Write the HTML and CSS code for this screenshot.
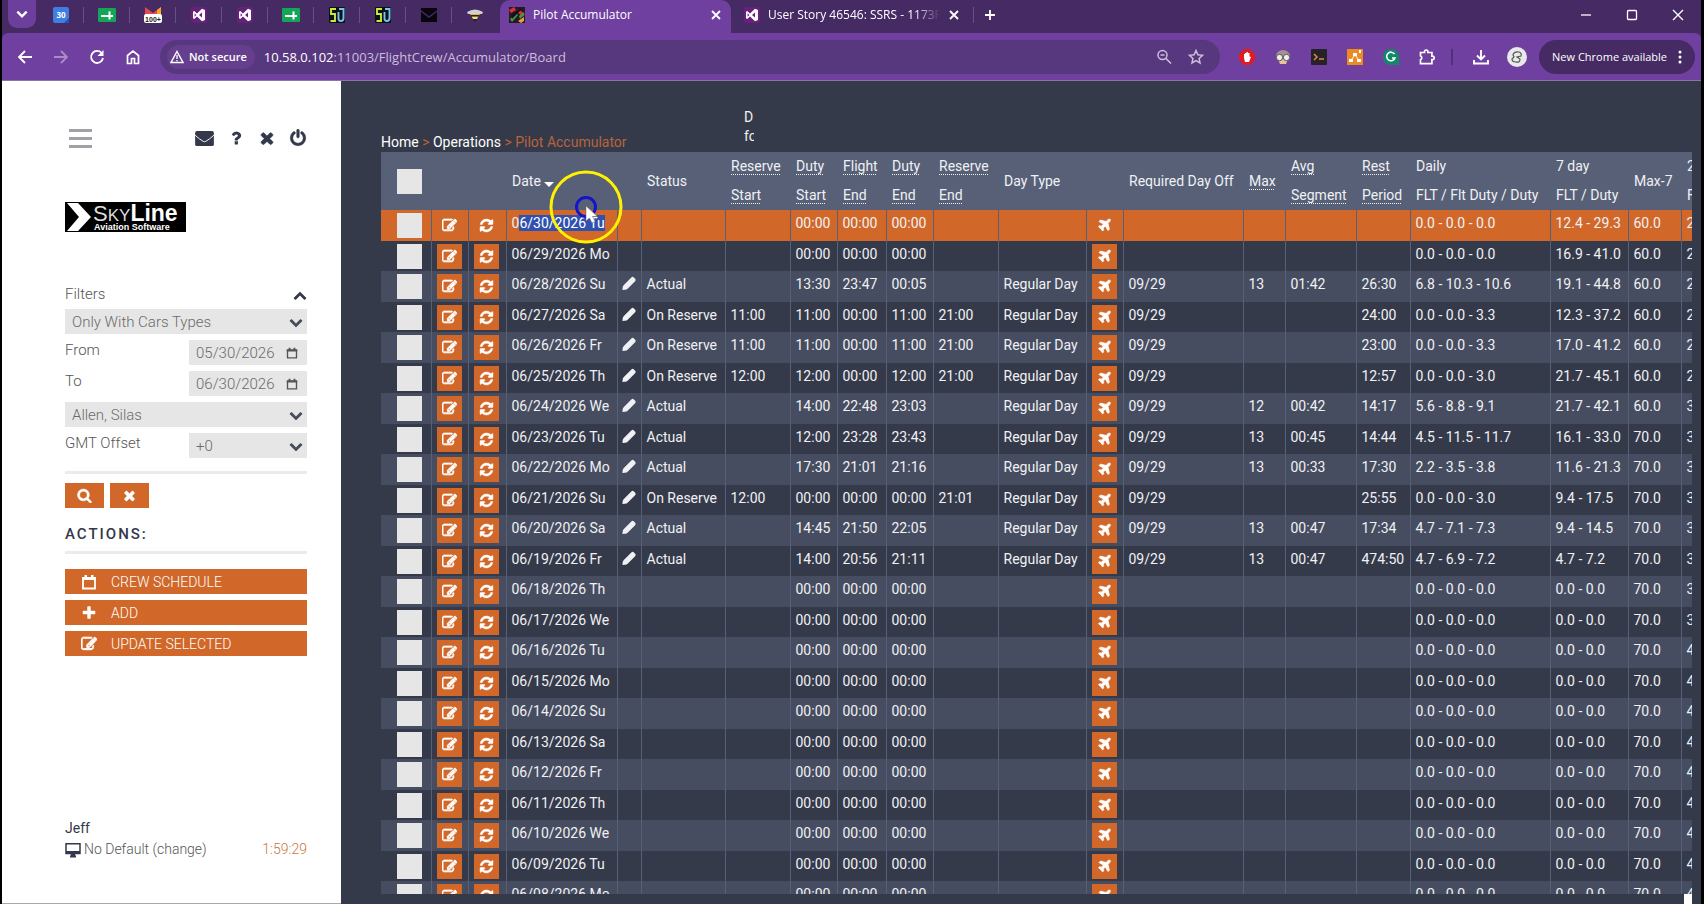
FILE: index.html
```html
<!DOCTYPE html>
<html lang="en">
<head>
<meta charset="utf-8">
<title>Pilot Accumulator</title>
<link rel="stylesheet" href="styles.css">
</head>
<body>
<svg class="sprite" aria-hidden="true">
  <symbol id="edit" viewBox="0 0 1792 1792"><path d="M888 1184l116-116-152-152-116 116v56h96v96h56zm440-720q-16-16-33 1l-350 350q-17 17-1 33t33-1l350-350q17-17 1-33zm80 594v190q0 119-84.500 203.500t-203.500 84.500h-832q-119 0-203.500-84.500t-84.500-203.500v-832q0-119 84.500-203.500t203.500-84.500h832q63 0 117 25 15 7 18 23 3 17-9 29l-49 49q-14 14-32 8-23-6-45-6h-832q-66 0-113 47t-47 113v832q0 66 47 113t113 47h832q66 0 113-47t47-113v-126q0-13 9-22l64-64q15-15 35-7t20 29zm-96-738l288 288-672 672h-288v-288zm444 132l-92 92-288-288 92-92q28-28 68-28t68 28l152 152q28 28 28 68t-28 68z" stroke="currentColor" stroke-width="100"/></symbol>
  <symbol id="refresh" viewBox="0 0 1792 1792"><path d="M1639 1056q0 5-1 7-64 268-268 434.500t-478 166.500q-146 0-282.500-55t-243.500-157l-129 129q-19 19-45 19t-45-19-19-45v-448q0-26 19-45t45-19h448q26 0 45 19t19 45-19 45l-137 137q71 66 161 102t187 36q134 0 250-65t186-179q11-17 53-117 8-23 30-23h192q13 0 22.500 9.500t9.500 22.500zm25-800v448q0 26-19 45t-45 19h-448q-26 0-45-19t-19-45 19-45l138-138q-148-137-349-137-134 0-250 65t-186 179q-11 17-53 117-8 23-30 23h-199q-13 0-22.500-9.500t-9.500-22.500v-7q65-268 270-434.500t480-166.500q146 0 284 55.500t245 156.500l130-129q19-19 45-19t45 19 19 45z" stroke="currentColor" stroke-width="60"/></symbol>
  <symbol id="plane" viewBox="0 0 1792 1792"><path d="M1568 160q44 52 12 148t-108 172l-161 161 160 696q5 19-12 33l-128 96q-7 6-19 6-4 0-7-1-15-3-21-16l-279-508-259 259 53 194q5 17-8 31l-96 96q-9 9-23 9h-2q-15-2-24-13l-189-252-252-189q-11-7-13-23-1-13 9-25l96-97q9-9 23-9 6 0 8 1l194 53 259-259-508-279q-14-8-17-24-2-16 9-27l128-128q14-13 30-8l665 159 160-160q76-76 172-108t148 12z" stroke="currentColor" stroke-width="100"/></symbol>
  <symbol id="times" viewBox="0 0 1792 1792"><path d="M1490 1322q0 40-28 68l-136 136q-28 28-68 28t-68-28l-294-294-294 294q-28 28-68 28t-68-28l-136-136q-28-28-28-68t28-68l294-294-294-294q-28-28-28-68t28-68l136-136q28-28 68-28t68 28l294 294 294-294q28-28 68-28t68 28l136 136q28 28 28 68t-28 68l-294 294 294 294q28 28 28 68z" stroke="currentColor" stroke-width="60"/></symbol>
  <symbol id="plus" viewBox="0 0 1792 1792"><path d="M1600 736v192q0 40-28 68t-68 28h-416v416q0 40-28 68t-68 28h-192q-40 0-68-28t-28-68v-416h-416q-40 0-68-28t-28-68v-192q0-40 28-68t68-28h416v-416q0-40 28-68t68-28h192q40 0 68 28t28 68v416h416q40 0 68 28t28 68z"/></symbol>
  <symbol id="search" viewBox="0 0 1792 1792"><path d="M1216 832q0-185-131.500-316.500t-316.500-131.500-316.500 131.500-131.500 316.500 131.500 316.500 316.500 131.500 316.500-131.500 131.500-316.500zm512 832q0 52-38 90t-90 38q-54 0-90-38l-343-342q-179 124-399 124-143 0-273.500-55.500t-225-150-150-225-55.500-273.500 55.500-273.500 150-225 225-150 273.500-55.500 273.500 55.500 225 150 150 225 55.500 273.500q0 220-124 399l343 343q37 37 37 90z" stroke="currentColor" stroke-width="60"/></symbol>
  <symbol id="down" viewBox="0 0 1792 1792"><path d="M1683 808l-742 741q-19 19-45 19t-45-19l-742-741q-19-19-19-45.500t19-45.500l166-165q19-19 45-19t45 19l531 531 531-531q19-19 45-19t45 19l166 165q19 19 19 45.500t-19 45.500z"/></symbol>
  <symbol id="up" viewBox="0 0 1792 1792"><path d="M1683 1331l-166 165q-19 19-45 19t-45-19l-531-531-531 531q-19 19-45 19t-45-19l-166-165q-19-19-19-45.500t19-45.500l742-741q19-19 45-19t45 19l742 741q19 19 19 45.500t-19 45.500z"/></symbol>
  <symbol id="power" viewBox="0 0 1792 1792"><path d="M1664 896q0 156-61 298t-164 245-245 164-298 61-298-61-245-164-164-245-61-298q0-182 80.500-343t226.500-270q43-32 95.500-25t83.500 50q32 42 24.500 94.500t-49.500 84.500q-98 74-151.500 181t-53.500 228q0 104 40.500 198.500t109.500 163.500 163.500 109.500 198.500 40.500 198.500-40.500 163.500-109.500 109.500-163.500 40.500-198.500q0-121-53.500-228t-151.500-181q-42-32-49.500-84.500t24.500-94.500q31-43 84-50t95 25q146 109 226.500 270t80.500 343zm-640-768v640q0 52-38 90t-90 38-90-38-38-90v-640q0-52 38-90t90-38 90 38 38 90z" stroke="currentColor" stroke-width="50"/></symbol>
  <symbol id="question" viewBox="0 0 1792 1792"><path d="M1088 1256v240q0 16-12 28t-28 12h-240q-16 0-28-12t-12-28v-240q0-16 12-28t28-12h240q16 0 28 12t12 28zm316-600q0 54-15.500 101t-35 76.500-55 59.500-57.500 43.500-61 35.500q-41 23-68.500 65t-27.500 67q0 17-12 32.500t-28 15.500h-240q-15 0-25.500-18.500t-10.500-37.500v-45q0-83 65-156.500t143-108.500q59-27 84-56t25-76q0-42-46.500-74t-107.500-32q-65 0-108 29-35 25-107 115-13 16-31 16-12 0-25-8l-164-125q-13-10-15.500-25t5.500-28q160-266 464-266 80 0 161 31t146 83 106 127.500 41 158.500z"/></symbol>
  <symbol id="pencil" viewBox="0 0 16 16"><path d="M10.500 1.500Q11.900.2 13.200 1.500L14.600 2.900Q15.800 4.200 14.500 5.500L6.800 13.300Q5.500 14.600 3.800 14.700L1 15 1.200 12.200Q1.300 10.700 2.500 9.500Z"/></symbol>
  <symbol id="calendar" viewBox="0 0 16 16"><path fill="none" stroke="currentColor" stroke-width="1.800" d="M2 4.500h12v10H2z"/><path d="M1 3h14v3H1zM3.500 1h2.500v3H3.500zM10 1h2.500v3H10z"/></symbol>
  <symbol id="envelope" viewBox="0 0 20 16"><rect x="0" y="0" width="20" height="16" rx="2"/><path d="M0 4.500Q5 9 8.500 11q1.500.9 3 0Q15 9 20 4.500" fill="none" stroke="#fff" stroke-width="1"/></symbol>
  <symbol id="desktop" viewBox="0 0 16 16"><path fill="none" stroke="currentColor" stroke-width="1.500" d="M1 1.800h14v9.700H1z"/><path d="M1 9h14v3H1zM6 12h4l1 2.500v1H5v-1z"/></symbol>
  <symbol id="close" viewBox="0 0 12 12"><path d="M2 2l8 8M10 2l-8 8" fill="none" stroke="currentColor" stroke-width="1.800"/></symbol>
  <symbol id="vs" viewBox="0 0 16 16"><rect width="16" height="16" rx="2" fill="#68217a"/><path d="M11 1.800L14 3v10l-3 1.200-5-4.600L3.200 12 2 11.300V4.700L3.200 4 6 6.400zM11 5.500L8 8l3 2.500zM3.600 6.200v3.600L5.300 8z" fill="#fff" fill-rule="evenodd"/></symbol>
  <symbol id="sheet" viewBox="0 0 18 16"><rect y="1" width="18" height="14" rx="1" fill="#14a558"/><path d="M3 9h12M11.500 4.500v8" stroke="#fff" stroke-width="2" fill="none"/></symbol>
  <symbol id="sq" viewBox="0 0 16 16"><rect width="16" height="16" rx="1" fill="#111"/><path d="M7 2H2v5h4v7H1.500" fill="none" stroke="#c5ea45" stroke-width="1.900"/><path d="M10 2h4.500v9q0 3-2.500 3-2.500 0-2.500-2.500V5" fill="none" stroke="#6fc6ee" stroke-width="1.900"/></symbol>
</svg>

<header class="browser">
  <div class="tabs">
    <button class="tab-search" aria-label="Search tabs"><svg viewBox="0 0 12 12"><path d="M2 4l4 4 4-4" fill="none" stroke="#fff" stroke-width="2"/></svg></button>
    <div class="pin"><svg viewBox="0 0 16 16"><rect width="16" height="16" rx="2" fill="#3f7de0"/><path d="M16 11v3l-2 2h-3z" fill="#1b53b4"/><text class="badge-text" x="8" y="11" text-anchor="middle">30</text></svg></div>
    <div class="pin"><svg class="wide"><use href="#sheet"/></svg></div>
    <div class="pin"><svg class="wide" viewBox="0 0 18 16"><path d="M1 0l8 6 8-6v10H1z" fill="#e5484d"/><path d="M13 3l4-3v9h-4z" fill="#f5a623"/><rect y="7" width="18" height="9" rx="2" fill="#fff"/><text class="count-text" x="9" y="15" text-anchor="middle">100+</text></svg></div>
    <div class="pin"><svg><use href="#vs"/></svg></div>
    <div class="pin"><svg><use href="#vs"/></svg></div>
    <div class="pin"><svg class="wide"><use href="#sheet"/></svg></div>
    <div class="pin"><svg><use href="#sq"/></svg></div>
    <div class="pin"><svg><use href="#sq"/></svg></div>
    <div class="pin"><svg class="wide" viewBox="0 0 18 16"><path d="M1 1h16v14H1z" fill="#08060c"/><path d="M1 4l8 6 8-6" fill="none" stroke="#452a63" stroke-width="1.500"/></svg></div>
    <div class="pin"><svg viewBox="0 0 16 16"><path d="M0 5q8-5 16 0l-1 2H1z" fill="#cfd2d4"/><path d="M3 7h10l-2 3H5z" fill="#e8b93b"/><path d="M4 8h8v1.500H4zM6 12h4l-2 3z" fill="#222"/><path d="M5 10h6l-1 2H6z" fill="#f3dc8b"/></svg></div>
    <div class="tab active"><svg class="fav" viewBox="0 0 16 16"><rect width="16" height="16" fill="#2b1723"/><path d="M0 3l5-3 2 3-5 3zM9 2l7 5-2 3-6-5z" fill="#d8323c"/><path d="M1 12l6-6 2 2-6 7zM10 9l5-4v3l-4 4z" fill="#3c9c4c"/><path d="M9 14l6-4v4l-3 2z" fill="#e2a53b"/><path d="M2 9l9-8 1 2-9 9z" fill="#181018"/></svg><span class="tab-title">Pilot Accumulator</span><button class="tab-close" aria-label="Close tab"><svg><use href="#close"/></svg></button></div>
    <div class="tab"><svg class="fav"><use href="#vs"/></svg><span class="tab-title fade">User Story 46546: SSRS - 1173R</span><button class="tab-close" aria-label="Close tab"><svg><use href="#close"/></svg></button></div>
    <button class="new-tab" aria-label="New tab"><svg viewBox="0 0 12 12"><path d="M6 1v10M1 6h10" stroke="#fff" stroke-width="1.800"/></svg></button>
    <div class="window-buttons">
      <button aria-label="Minimize"><svg viewBox="0 0 12 12"><path d="M1 6h10" stroke="#fff" stroke-width="1.300"/></svg></button>
      <button aria-label="Maximize"><svg viewBox="0 0 12 12"><rect x="1.500" y="1.500" width="9" height="9" rx="1" fill="none" stroke="#fff" stroke-width="1.300"/></svg></button>
      <button aria-label="Close window"><svg viewBox="0 0 12 12"><path d="M1 1l10 10M11 1L1 11" stroke="#fff" stroke-width="1.400"/></svg></button>
    </div>
  </div>
  <div class="toolbar">
    <nav class="nav-buttons">
      <button aria-label="Back"><svg viewBox="0 0 16 16"><path d="M15 8H2.500M8 2L2 8l6 6" fill="none" stroke="#fff" stroke-width="1.800"/></svg></button>
      <button class="dim" aria-label="Forward"><svg viewBox="0 0 16 16"><path d="M1 8h12.500M8 2l6 6-6 6" fill="none" stroke="#fff" stroke-width="1.800"/></svg></button>
      <button aria-label="Reload"><svg viewBox="0 0 16 16"><path d="M13 4.500A6 6 0 1 0 14 9" fill="none" stroke="#fff" stroke-width="1.800"/><path d="M14.500 1v6h-6z" fill="#fff"/></svg></button>
      <button aria-label="Home"><svg viewBox="0 0 16 16"><path d="M2.500 6.500L8 2l5.500 4.500v8h-4v-5h-3v5h-4z" fill="none" stroke="#fff" stroke-width="1.700"/></svg></button>
    </nav>
    <div class="address">
      <span class="chip"><svg viewBox="0 0 14 14"><path d="M7 1.500L13 12.500H1z" fill="none" stroke="#fff" stroke-width="1.400"/><path d="M7 5v4M7 10v1.300" stroke="#fff" stroke-width="1.300"/></svg>Not secure</span>
      <span class="url">10.58.0.102<span>:11003/FlightCrew/Accumulator/Board</span></span>
      <button aria-label="Zoom"><svg viewBox="0 0 16 16"><circle cx="6.500" cy="6" r="4.500" fill="none" stroke="#cdbfdc" stroke-width="1.500"/><path d="M4.500 6h4M10 9.500l5 5" stroke="#cdbfdc" stroke-width="1.600"/></svg></button>
      <button aria-label="Bookmark"><svg viewBox="0 0 16 16"><path d="M8 1.500l1.900 4.300 4.600.5-3.400 3.100.9 4.600L8 11.700 4 14l.9-4.600L1.500 6.300l4.600-.5z" fill="none" stroke="#cdbfdc" stroke-width="1.500"/></svg></button>
    </div>
    <div class="extensions">
      <button aria-label="Ad blocker"><svg viewBox="0 0 16 16"><path d="M5 0h6l5 5v6l-5 5H5l-5-5V5z" fill="#e01b24"/><path d="M5 5v4l1 4h4l2-5-1.500-.5V4H9V3H7.500v1H6v1z" fill="#fff"/></svg></button>
      <button aria-label="Extension"><svg viewBox="0 0 16 16"><path d="M1 7a7 6 0 0 1 14 0l-1 2H2z" fill="#a99090"/><path d="M3 10h10l-2 5H5z" fill="#e9c29a"/><circle cx="4.500" cy="8.500" r="3.200" fill="#eee" stroke="#555"/><circle cx="11.500" cy="8.500" r="3.200" fill="#eee" stroke="#555"/></svg></button>
      <button aria-label="Terminal"><svg viewBox="0 0 16 16"><rect width="16" height="16" rx="1" fill="#26222a"/><path d="M3 5l3 3-3 3M8 10h5" fill="none" stroke="#e08a3c" stroke-width="1.500"/></svg></button>
      <button aria-label="Diagram"><svg viewBox="0 0 16 16"><rect width="16" height="16" fill="#ee8a22"/><path d="M6 4h4v3H6zM2 10h4v3H2zM10 10h4v3h-4zM12 1h2v3h-2z" fill="#fff"/><path d="M8 6l-4 5M8 6l4 5" stroke="#fff"/></svg></button>
      <button aria-label="Grammar"><svg viewBox="0 0 16 16"><path d="M8 0a8 8 0 0 1 8 8v8H8A8 8 0 0 1 8 0z" fill="#0f8a68"/><path d="M11.500 5A4.300 4.300 0 1 0 12 9H9" fill="none" stroke="#fff" stroke-width="1.600"/></svg></button>
      <button aria-label="Extensions"><svg viewBox="0 0 16 16"><path d="M1.500 3.500h4V2.700a1.700 1.700 0 0 1 3.400 0v.8h4v3.700h.6a1.700 1.700 0 0 1 0 3.400h-.6v4H1.500v-4a1.900 1.900 0 0 0 0-3.600z" fill="none" stroke="#fff" stroke-width="1.700"/></svg></button>
    </div>
    <button class="download" aria-label="Downloads"><svg viewBox="0 0 16 16"><path d="M8 1v9M4 6.500L8 10.500l4-4M1 11v3.500h14V11" fill="none" stroke="#fff" stroke-width="1.900"/></svg></button>
    <button class="avatar" aria-label="Profile"><svg viewBox="0 0 20 20"><circle cx="10" cy="10" r="10" fill="#e9e9e9"/><path d="M6 8q1-4 6-3 3 1 2 4l-4 1 3 2q0 4-4 3-4 0-4-3l2-2z" fill="none" stroke="#555" stroke-width="1.200"/></svg></button>
    <button class="update">New Chrome available<svg viewBox="0 0 4 14"><circle cx="2" cy="2" r="1.500"/><circle cx="2" cy="7" r="1.500"/><circle cx="2" cy="12" r="1.500"/></svg></button>
  </div>
</header>

<div class="page">
  <aside class="sidebar">
    <div class="side-top">
      <button class="burger" aria-label="Menu"><i></i><i></i><i></i></button>
      <div class="side-icons">
        <button aria-label="Messages"><svg class="mail"><use href="#envelope"/></svg></button>
        <button aria-label="Help"><svg><use href="#question"/></svg></button>
        <button aria-label="Close"><svg><use href="#times"/></svg></button>
        <button aria-label="Log out"><svg><use href="#power"/></svg></button>
      </div>
    </div>
    <svg class="logo" viewBox="0 0 121 30" role="img" aria-label="SkyLine Aviation Software"><rect width="121" height="30" fill="#000"/><path d="M2 1h11l13 14-13 14H2l12-14z" fill="#fff"/><text class="logo-thin" x="28" y="19">S<tspan class="logo-caps">KY</tspan><tspan class="logo-bold">Line</tspan></text><text class="logo-sub" x="29" y="28">Aviation Software</text></svg>
    <form class="filters">
      <div class="filters-head"><span>Filters</span><svg><use href="#up"/></svg></div>
      <div class="control"><select aria-label="Types"><option>Only With Cars Types</option></select><svg><use href="#down"/></svg></div>
      <div class="field"><label for="from">From</label><div class="control"><input id="from" type="text" value="05/30/2026"><svg class="cal"><use href="#calendar"/></svg></div></div>
      <div class="field"><label for="to">To</label><div class="control"><input id="to" type="text" value="06/30/2026"><svg class="cal"><use href="#calendar"/></svg></div></div>
      <div class="control"><select aria-label="Pilot"><option>Allen, Silas</option></select><svg><use href="#down"/></svg></div>
      <div class="field"><label for="gmt">GMT Offset</label><div class="control"><select id="gmt"><option>+0</option></select><svg><use href="#down"/></svg></div></div>
      <hr>
      <div class="form-buttons">
        <button type="button" aria-label="Search"><svg><use href="#search"/></svg></button>
        <button type="button" aria-label="Clear"><svg><use href="#times"/></svg></button>
      </div>
    </form>
    <h2 class="actions-title">ACTIONS:</h2>
    <hr>
    <div class="actions">
      <button><svg><use href="#calendar"/></svg>CREW SCHEDULE</button>
      <button><svg><use href="#plus"/></svg>ADD</button>
      <button><svg><use href="#edit"/></svg>UPDATE SELECTED</button>
    </div>
    <footer class="user">
      <div class="user-name">Jeff</div>
      <div class="user-row"><a href="#"><svg><use href="#desktop"/></svg>No Default (change)</a><span class="timer">1:59:29</span></div>
    </footer>
  </aside>

  <main class="main">
    <div class="crumb-row">
      <nav class="crumbs"><a href="#">Home</a> <span>&gt;</span> <a href="#">Operations</a> <span>&gt; Pilot Accumulator</span></nav>
      <div class="note">D<br>for<br>-</div>
    </div>
    <div class="board">
      <table class="grid">
        <colgroup><col class="w50"><col class="w37"><col class="w38"><col class="w111"><col class="w24"><col class="w84"><col class="w65"><col class="w47"><col class="w49"><col class="w47"><col class="w65"><col class="w88"><col class="w37"><col class="w120"><col class="w42"><col class="w71"><col class="w54"><col class="w140"><col class="w78"><col class="w53"><col class="w65"></colgroup>
        <thead><tr>
          <th class="check"><input type="checkbox" aria-label="Select all"></th><th></th><th></th>
          <th>Date<i class="sort"></i></th><th></th><th>Status</th>
          <th><abbr>Reserve</abbr><br><abbr>Start</abbr></th><th><abbr>Duty</abbr><br><abbr>Start</abbr></th>
          <th><abbr>Flight</abbr><br><abbr>End</abbr></th><th><abbr>Duty</abbr><br><abbr>End</abbr></th>
          <th><abbr>Reserve</abbr><br><abbr>End</abbr></th><th>Day Type</th><th></th><th>Required Day Off</th>
          <th><abbr>Max</abbr></th><th><abbr>Avg</abbr><br><abbr>Segment</abbr></th><th><abbr>Rest</abbr><br><abbr>Period</abbr></th>
          <th>Daily<br>FLT / Flt Duty / Duty</th><th>7 day<br>FLT / Duty</th><th>Max-7</th><th>28 day<br>FLT</th>
        </tr></thead>
        <tbody id="rows"></tbody>
      </table>
      <svg class="pointer" viewBox="0 0 76 76" aria-hidden="true"><circle cx="38" cy="38" r="35" fill="none" stroke="#fff200" stroke-width="3"/><circle cx="38" cy="38" r="9.500" fill="none" stroke="#1414c8" stroke-width="3"/><path d="M38 37v15l3.500-3 2.500 5 3-1.500-2.500-5h5z" fill="#fff" stroke="#666" stroke-width=".5"/></svg>
    </div>
    <div class="corner"></div>
  </main>
</div>
<script src="board.js"></script>
</body>
</html>
```
FILE: board.js
```js
// date | status | reserve start | duty start | flight end | duty end | reserve end | max | avg segment | rest | daily | 7 day | max-7 | 28 day
const data = `06/30/2026 Tu|||00:00|00:00|00:00|||||0.0 - 0.0 - 0.0|12.4 - 29.3|60.0|2
06/29/2026 Mo|||00:00|00:00|00:00|||||0.0 - 0.0 - 0.0|16.9 - 41.0|60.0|2
06/28/2026 Su|Actual||13:30|23:47|00:05||13|01:42|26:30|6.8 - 10.3 - 10.6|19.1 - 44.8|60.0|2
06/27/2026 Sa|On Reserve|11:00|11:00|00:00|11:00|21:00|||24:00|0.0 - 0.0 - 3.3|12.3 - 37.2|60.0|2
06/26/2026 Fr|On Reserve|11:00|11:00|00:00|11:00|21:00|||23:00|0.0 - 0.0 - 3.3|17.0 - 41.2|60.0|2
06/25/2026 Th|On Reserve|12:00|12:00|00:00|12:00|21:00|||12:57|0.0 - 0.0 - 3.0|21.7 - 45.1|60.0|2
06/24/2026 We|Actual||14:00|22:48|23:03||12|00:42|14:17|5.6 - 8.8 - 9.1|21.7 - 42.1|60.0|3
06/23/2026 Tu|Actual||12:00|23:28|23:43||13|00:45|14:44|4.5 - 11.5 - 11.7|16.1 - 33.0|70.0|3
06/22/2026 Mo|Actual||17:30|21:01|21:16||13|00:33|17:30|2.2 - 3.5 - 3.8|11.6 - 21.3|70.0|3
06/21/2026 Su|On Reserve|12:00|00:00|00:00|00:00|21:01|||25:55|0.0 - 0.0 - 3.0|9.4 - 17.5|70.0|3
06/20/2026 Sa|Actual||14:45|21:50|22:05||13|00:47|17:34|4.7 - 7.1 - 7.3|9.4 - 14.5|70.0|3
06/19/2026 Fr|Actual||14:00|20:56|21:11||13|00:47|474:50|4.7 - 6.9 - 7.2|4.7 - 7.2|70.0|3`
  .split("\n").map(line => line.split("|"));

["18/2026 Th", "17/2026 We", "16/2026 Tu", "15/2026 Mo", "14/2026 Su", "13/2026 Sa", "12/2026 Fr",
 "11/2026 Th", "10/2026 We", "09/2026 Tu", "08/2026 Mo"].forEach((day, i) => {
  data.push(["06/" + day, "", "", "00:00", "00:00", "00:00", "", "", "", "", "0.0 - 0.0 - 0.0", "0.0 - 0.0", "70.0", i < 2 ? "3" : "4"]);
});

const button = (icon, label) => `<td><button class="cell-button" aria-label="${label}"><svg><use href="#${icon}"/></svg></button></td>`;
const text = value => `<td>${value}</td>`;

document.getElementById("rows").innerHTML = data.map((d, i) => {
  const date = i ? d[0] : `0<mark>${d[0].slice(1)}</mark>`;
  const worked = d[1] !== "";
  return `<tr${i ? "" : ' class="current"'}>` +
    `<td class="check"><input type="checkbox" aria-label="Select ${d[0]}"></td>` +
    button("edit", "Edit") + button("refresh", "Refresh") + text(date) +
    `<td class="pen">${worked ? '<svg><use href="#pencil"/></svg>' : ""}</td>` +
    d.slice(1, 7).map(text).join("") + text(worked ? "Regular Day" : "") +
    button("plane", "Flights") + text(worked ? "09/29" : "") +
    d.slice(7).map(text).join("") + "</tr>";
}).join("");
```
FILE: styles.css
```css
* { box-sizing: border-box; }
body {
  margin: 0;
  height: 100vh;
  display: flex;
  flex-direction: column;
  overflow: hidden;
  border-left: 2px solid #000;
  border-right: 3px solid #000;
  background: #353a4a;
  font-family: Roboto, sans-serif;
  font-size: 14px;
}
button {
  padding: 0;
  border: 0;
  background: none;
  color: inherit;
  font: inherit;
  display: flex;
  align-items: center;
  justify-content: center;
}
svg { width: 16px; height: 16px; flex: none; fill: currentColor; }
hr { width: 100%; height: 3px; margin: 0; border: 0; background: #ebebeb; }
.sprite { position: absolute; width: 0; height: 0; }

/* Browser */
.browser { flex: none; background: #452a63; color: #fff; font-family: "Open Sans", "Noto Sans", sans-serif; font-size: 12px; }
.tabs { display: flex; height: 33px; }
.tab-search { width: 28px; height: 28px; margin: 0 2px 0 6px; border-radius: 0 0 9px 9px; background: #6b3f9b; }
.tab-search svg { width: 14px; height: 14px; }
.pin { width: 46px; height: 29px; display: flex; align-items: center; justify-content: center; background: linear-gradient(#69508a, #69508a) right center / 1px 16px no-repeat; }
.pin:nth-child(11) { background: none; }
.pin .wide { width: 18px; }
.badge-text { font: bold 8px "Open Sans", sans-serif; fill: #fff; }
.count-text { font: bold 7px "Liberation Sans", sans-serif; fill: #222; }
.tab { display: flex; align-items: center; gap: 8px; width: 242px; padding: 0 13px 4px; }
.tab.active { width: 231px; margin-left: 2px; padding: 0 9px 4px; background: #6f409f; border-radius: 10px 10px 0 0; }
.tab-title { flex: 1; overflow: hidden; white-space: nowrap; }
.fade { -webkit-mask-image: linear-gradient(90deg, #000 85%, transparent); mask-image: linear-gradient(90deg, #000 85%, transparent); }
.tab-close svg { width: 12px; height: 12px; }
.new-tab { width: 34px; height: 29px; background: linear-gradient(#69508a, #69508a) left center / 1px 16px no-repeat; }
.new-tab svg { width: 12px; height: 12px; }
.window-buttons { display: flex; margin-left: auto; height: 29px; }
.window-buttons button { width: 46px; }
.window-buttons svg { width: 12px; height: 12px; }
.toolbar { display: flex; align-items: center; height: 48px; padding: 0 6px 0 5px; background: #6f409f; border-bottom: 1px solid #8b75a3; border-radius: 6px 6px 0 0; }
.nav-buttons { display: flex; margin-right: 9px; }
.nav-buttons button { width: 36px; height: 34px; }
.dim { opacity: .4; }
.address { flex: 1; display: flex; align-items: center; height: 34px; padding: 0 16px 0 7px; border-radius: 17px; background: #57377d; gap: 16px; }
.chip { display: flex; align-items: center; gap: 5px; height: 24px; padding: 0 8px 0 3px; border-radius: 12px; background: #653f8d; font-size: 11px; font-weight: 600; margin-right: -7px; }
.chip svg { width: 14px; height: 14px; }
.url { flex: 1; font-size: 13px; }
.url span { color: #cdbfdc; }
.extensions { display: flex; align-items: center; padding: 0 8px 0 9px; margin-right: 8px; background: linear-gradient(#50307a, #50307a) right center / 2px 16px no-repeat; }
.extensions button { width: 36px; height: 32px; }
.download { width: 40px; }
.avatar { width: 32px; }
.avatar svg { width: 20px; height: 20px; }
.update { gap: 11px; height: 34px; margin-left: 6px; padding: 0 13px; border-radius: 17px; background: #452a63; white-space: nowrap; font-size: 11px; }
.update svg { width: 4px; height: 14px; }

/* Sidebar */
.page { flex: 1; display: flex; min-height: 0; }
.sidebar { flex: none; width: 339px; display: flex; flex-direction: column; padding: 48px 34px 43px 63px; background: #fff; color: #555; font-size: 15px; font-weight: 300; border-bottom: 1px solid #aaa; }
.side-top { display: flex; justify-content: space-between; align-items: flex-start; height: 73px; }
.burger { flex-direction: column; gap: 5px; margin-left: 4px; }
.burger i { width: 23px; height: 3px; background: #a0a2a8; }
.side-icons { display: flex; gap: 13px; color: #33384a; }
.side-icons button { height: 18px; }
.side-icons svg { width: 18px; height: 18px; }
.side-icons .mail { width: 19px; height: 15px; }
.logo { width: 121px; height: 30px; }
.logo-thin { font: 22px "Liberation Sans", sans-serif; fill: #ddd; }
.logo-caps { font-size: 17px; }
.logo-bold { font-weight: bold; font-size: 23px; fill: #fff; }
.logo-sub { font: bold 9px "Liberation Sans", sans-serif; fill: #fff; }
.filters { display: flex; flex-direction: column; gap: 6px; margin-top: 52px; }
.filters-head, .field { display: flex; justify-content: space-between; }
.filters-head { height: 19px; line-height: 21px; }
.filters-head svg { width: 14px; height: 14px; margin-top: 4px; color: #33384a; }
.control { display: grid; grid-template-columns: 1fr 26px; align-items: center; height: 25px; background: #e6e6e6; }
.field .control { width: 118px; }
.field label { line-height: 20px; }
.control select, .control input { grid-area: 1 / 1 / 2 / 3; width: 100%; height: 25px; padding: 0 7px; border: 0; background: none; color: #6a6a6a; font: inherit; appearance: none; border-radius: 0; }
.control svg { grid-area: 1 / 2; width: 14px; height: 14px; margin-left: 8px; color: #444b59; pointer-events: none; }
.control .cal { width: 12px; height: 12px; margin-left: 5px; color: #555; }
.filters hr { margin: 7px 0 3px; }
.form-buttons { display: flex; gap: 6px; color: #fff; }
.form-buttons button { width: 39px; height: 25px; background: #d16829; }
.form-buttons svg { width: 15px; height: 15px; }
.actions-title { margin: 16px 0 7px; color: #33384a; font-size: 15px; line-height: 20px; font-weight: 500; letter-spacing: 2px; }
.actions { display: flex; flex-direction: column; gap: 6px; margin-top: 15px; }
.actions button { justify-content: flex-start; gap: 14px; height: 25px; padding: 0 16px; background: #d16829; color: #fff; font-size: 14px; }
.user { margin-top: auto; line-height: 21px; color: #33384a; }
.user-name { font-weight: 400; font-size: 14px; }
.user-row { display: flex; justify-content: space-between; font-size: 14px; }
.user-row a { display: flex; align-items: center; gap: 3px; color: #555; text-decoration: none; }
.user-row svg { color: #33384a; }
.timer { color: #c9773f; }

/* Board */
.main { flex: 1; min-width: 0; display: flex; flex-direction: column; padding: 0 9px 0 40px; }
.crumb-row { flex: none; display: flex; height: 71px; align-items: flex-end; color: #f0f0f0; }
.crumbs { width: 363px; line-height: 20px; }
.crumbs a { color: #fff; text-decoration: none; }
.crumbs span { color: #b8643a; }
.note { width: 10px; height: 44px; overflow: hidden; line-height: 19px; }
.board { flex: 1; min-height: 0; overflow: hidden; position: relative; }
.corner { flex: none; align-self: flex-end; width: 8px; height: 10px; background: #fff; }
.grid { width: 1365px; table-layout: fixed; border-collapse: collapse; color: #f0f1f4; line-height: 27px; }
.grid th { height: 57px; padding: 0 0 0 6px; font-weight: 400; text-align: left; line-height: 29px; white-space: nowrap; background: #576077; }
.grid td { height: 31px; padding: 0 0 0 5px; vertical-align: top; white-space: nowrap; border-left: 1px solid #586078; }
.grid td:first-child { border-left: 0; }
.grid tbody tr:nth-child(even) td { height: 30px; }
.grid tbody tr:nth-child(odd) { background: #474d60; }
.grid tbody tr.current { background: #d16829; }
.grid .check { padding-left: 16px; }
.check input { display: block; width: 25px; height: 25px; margin: 3px 0 0; appearance: none; background: #e6e6e6; }
.check input:hover { background: #fff; }
th.check input { margin: 0; }
.cell-button { width: 25px; height: 25px; margin: 3px 0 0; background: #d16829; color: #fff; }
.cell-button svg { width: 15px; height: 15px; }
.grid td.pen { padding: 5px 0 0 3px; line-height: 0; }
.pen svg { width: 16px; height: 15px; }
mark { background: #2f51b0; color: #fff; }
abbr { text-decoration: underline dotted 1px; text-underline-offset: 3px; }
.sort { display: inline-block; margin-left: 3px; vertical-align: -1px; border: 5px solid transparent; border-top-color: #fff; border-bottom: 0; }
.pointer { position: absolute; left: 167px; top: 17px; width: 76px; height: 76px; }
.w24 { width: 24px; }
.w37 { width: 37px; }
.w38 { width: 38px; }
.w42 { width: 42px; }
.w47 { width: 47px; }
.w49 { width: 49px; }
.w50 { width: 50px; }
.w53 { width: 53px; }
.w54 { width: 54px; }
.w65 { width: 65px; }
.w71 { width: 71px; }
.w78 { width: 78px; }
.w84 { width: 84px; }
.w88 { width: 88px; }
.w111 { width: 111px; }
.w120 { width: 120px; }
.w140 { width: 140px; }
```
